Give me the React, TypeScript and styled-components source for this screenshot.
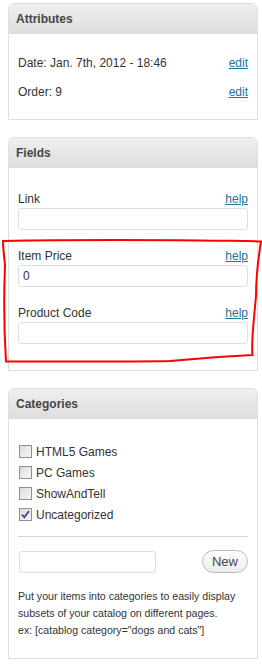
import React from 'react';
import styled, { createGlobalStyle } from 'styled-components';

const GlobalStyle = createGlobalStyle`
  body {
    margin: 0;
    background: #fff;
    font-family: "Liberation Sans", Arial, sans-serif;
    color: #333;
  }
`;

const Page = styled.div`
  position: relative;
  width: 262px;
  padding: 3px 4px 0 8px;
  box-sizing: border-box;
`;

const Panel = styled.div`
  width: 250px;
  box-sizing: border-box;
  border: 1px solid #dfdfdf;
  border-radius: 6px 6px 0 0;
  margin-bottom: 17px;
  background: #fff;
`;

const PanelHeader = styled.h3`
  margin: 0;
  height: 30px;
  box-sizing: border-box;
  padding: 9px 7px;
  font-size: 12px;
  line-height: 12px;
  font-weight: bold;
  color: #464646;
  background: linear-gradient(to bottom, #efefef, #dedede);
  border-bottom: 1px solid #dcdcdc;
  border-radius: 5px 5px 0 0;
`;

const PanelBody = styled.div<{ $top: number; $bottom: number }>`
  padding: ${p => p.$top}px 9px ${p => p.$bottom}px;
`;

const Row = styled.div<{ $height?: number }>`
  display: flex;
  justify-content: space-between;
  align-items: center;
  height: ${p => p.$height || 29}px;
  font-size: 12px;
`;

const Link = styled.a`
  color: #21759b;
  text-decoration: underline;
  font-size: 12px;
  cursor: pointer;
`;

const Field = styled.div`
  & + & {
    margin-top: 17px;
  }
`;

const TextInput = styled.input<{ $width?: number }>`
  display: block;
  width: ${p => (p.$width ? p.$width + 'px' : '100%')};
  height: 22px;
  box-sizing: border-box;
  border: 1px solid #dfdfdf;
  border-radius: 3px;
  padding: 0 4px;
  font-family: "Liberation Sans", Arial, sans-serif;
  font-size: 12px;
  color: #333;
  background: #fff;
  outline: none;
`;

const CheckRow = styled.label`
  display: flex;
  align-items: center;
  height: 21px;
  font-size: 12px;
  color: #333;
  padding-left: 1px;
`;

const Box = styled.span`
  display: inline-flex;
  align-items: center;
  justify-content: center;
  width: 13px;
  height: 13px;
  box-sizing: border-box;
  border: 1px solid #8f8f8f;
  background: linear-gradient(135deg, #dcdcdc, #f6f6f6);
  margin-right: 4px;
`;

const Separator = styled.hr`
  border: 0;
  border-top: 1px solid #d4d4d4;
  margin: 11px 0 14px;
`;

const AddRow = styled.div`
  display: flex;
  justify-content: space-between;
  align-items: center;
  padding-left: 1px;
`;

const NewButton = styled.button`
  width: 46px;
  height: 23px;
  border: 1px solid #bbb;
  border-radius: 12px;
  background: linear-gradient(to bottom, #fff, #ececec);
  font-family: "Liberation Sans", Arial, sans-serif;
  font-size: 13px;
  color: #464646;
  padding: 0;
  margin-top: -2px;
`;

const HelpText = styled.p`
  margin: 15px 0 0;
  font-size: 10.6px;
  line-height: 17px;
  color: #333;
`;

const Outline = styled.svg`
  position: absolute;
  left: 0;
  top: 0;
  pointer-events: none;
`;

const Check = () => (
  <svg width="11" height="11" viewBox="0 0 11 11">
    <path d="M2 5.5 L4.3 8.3 L9 2" fill="none" stroke="#3b4a8a" strokeWidth="1.8" />
  </svg>
);

const categories = [
  { name: 'HTML5 Games', checked: false },
  { name: 'PC Games', checked: false },
  { name: 'ShowAndTell', checked: false },
  { name: 'Uncategorized', checked: true },
];

const fields = [
  { label: 'Link', value: '' },
  { label: 'Item Price', value: '0' },
  { label: 'Product Code', value: '' },
];

export default function App() {
  return (
    <Page>
      <GlobalStyle />

      <Panel>
        <PanelHeader>Attributes</PanelHeader>
        <PanelBody $top={14} $bottom={13}>
          <Row>
            <span>Date: Jan. 7th, 2012 - 18:46</span>
            <Link>edit</Link>
          </Row>
          <Row>
            <span>Order: 9</span>
            <Link>edit</Link>
          </Row>
        </PanelBody>
      </Panel>

      <Panel>
        <PanelHeader>Fields</PanelHeader>
        <PanelBody $top={22} $bottom={26}>
          {fields.map(f => (
            <Field key={f.label}>
              <Row $height={18}>
                <span>{f.label}</span>
                <Link>help</Link>
              </Row>
              <TextInput defaultValue={f.value} />
            </Field>
          ))}
        </PanelBody>
      </Panel>

      <Panel>
        <PanelHeader>Categories</PanelHeader>
        <PanelBody $top={22} $bottom={19}>
          {categories.map(c => (
            <CheckRow key={c.name}>
              <Box>{c.checked && <Check />}</Box>
              {c.name}
            </CheckRow>
          ))}
          <Separator />
          <AddRow>
            <TextInput $width={137} />
            <NewButton>New</NewButton>
          </AddRow>
          <HelpText>
            Put your items into categories to easily display subsets of your catalog on different pages.
            <br />
            ex: [catablog category="dogs and cats"]
          </HelpText>
        </PanelBody>
      </Panel>

      <Outline width="262" height="671" viewBox="0 0 262 671">
        <path
          d="M3 241 C60 240 140 240 200 240.5 C230 241 250 240.5 261 241.5 C258 260 256 280 256 296 C254 320 251 340 252.5 355 C230 356 200 358 170 361 C120 362 60 361.5 6 361.5 C4 330 4 290 5 265 C4 255 3 248 3 241 Z"
          fill="none"
          stroke="#f00"
          strokeWidth="2"
        />
      </Outline>
    </Page>
  );
}
